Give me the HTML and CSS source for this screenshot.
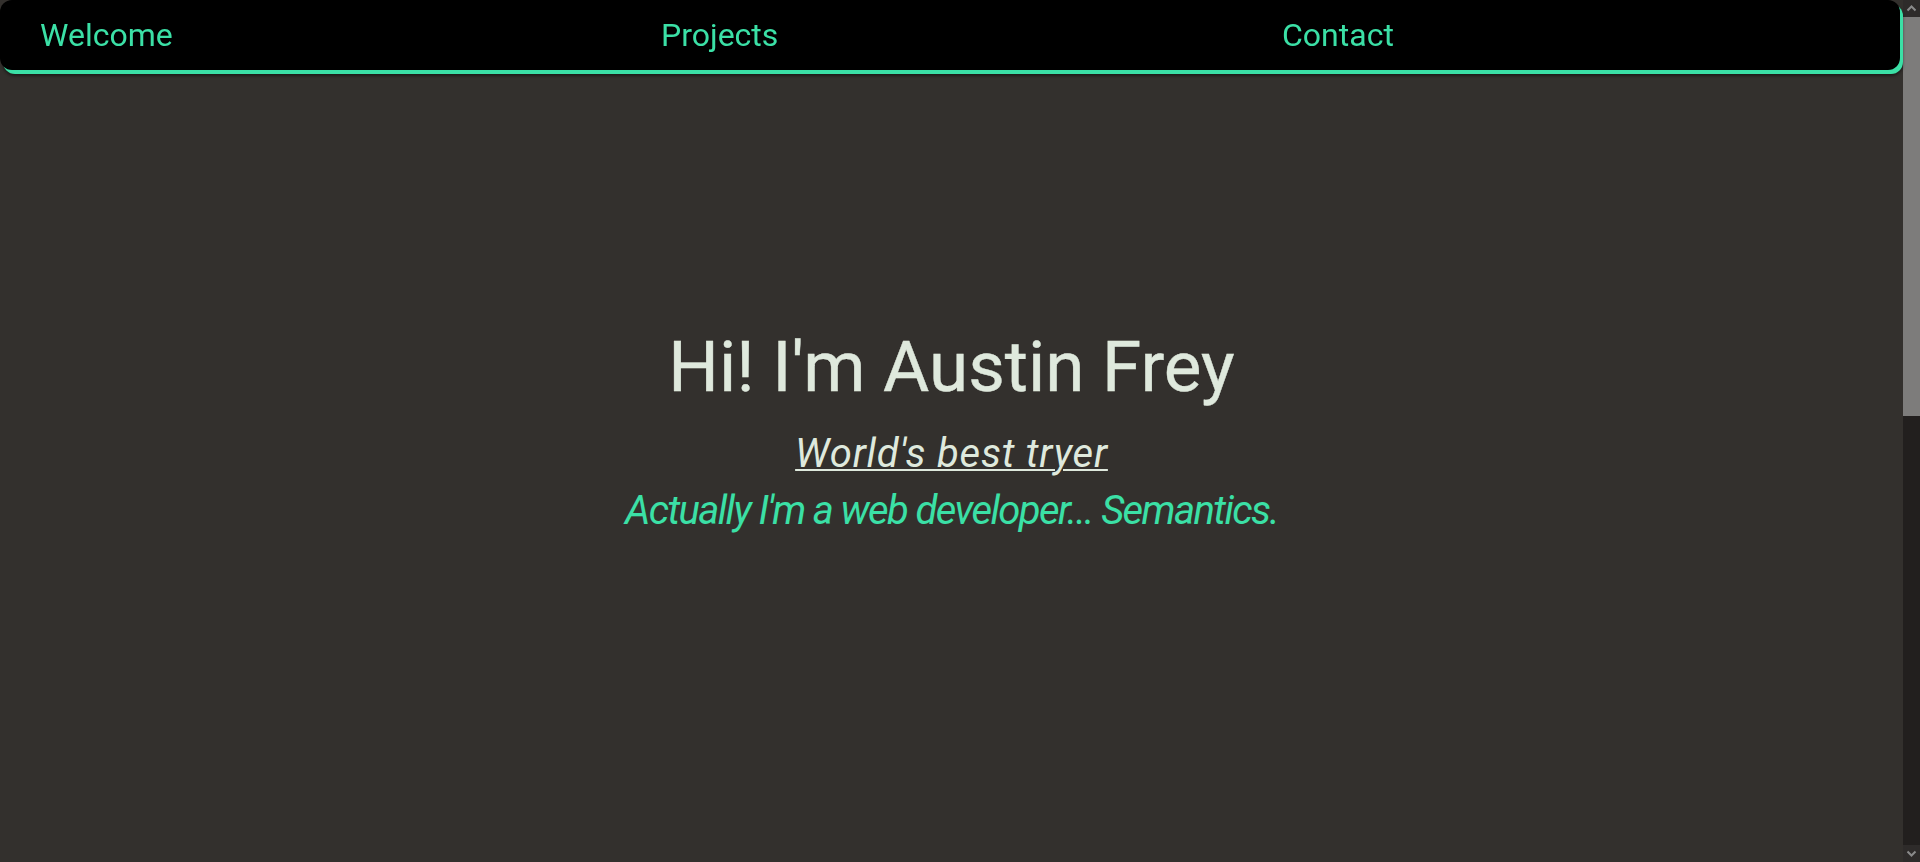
FILE: index.html
```html
<!DOCTYPE html>
<html lang="en">
<head>
<meta charset="utf-8">
<title>Austin Frey</title>
<link rel="stylesheet" href="styles.css">
</head>
<body>
<div class="page">
  <nav class="nav">
    <ul class="nav-list">
      <li class="nav-item"><a class="nav-link" href="#welcome">Welcome</a></li>
      <li class="nav-item"><a class="nav-link" href="#projects">Projects</a></li>
      <li class="nav-item"><a class="nav-link" href="#contact">Contact</a></li>
    </ul>
  </nav>
  <main class="main">
    <section class="hero" id="welcome">
      <h1 class="hero-title">Hi! I'm Austin Frey</h1>
      <p class="hero-tag"><span class="hero-tag-text">World's best tryer</span></p>
      <p class="hero-sub">Actually I'm a web developer... Semantics.</p>
    </section>
    <section class="projects" id="projects"></section>
  </main>
</div>
<div class="scrollbar" aria-hidden="true">
  <div class="sb-btn">
    <svg width="17" height="17" viewBox="0 0 17 17"><polyline points="4.5,10.5 8.5,6.5 12.5,10.5" fill="none" stroke="#8a8a8a" stroke-width="2"/></svg>
  </div>
  <div class="sb-thumb"></div>
  <div class="sb-track"></div>
  <div class="sb-btn">
    <svg width="17" height="17" viewBox="0 0 17 17"><polyline points="4.5,6.5 8.5,10.5 12.5,6.5" fill="none" stroke="#8a8a8a" stroke-width="2"/></svg>
  </div>
</div>
</body>
</html>
```
FILE: styles.css
```css
html {
  background: #33302d;
}
body {
  margin: 0;
  background: #33302d;
  font-family: Roboto, "Liberation Sans", sans-serif;
  color: #dfe9dd;
}
.page {
  margin-right: 17px;
}
.nav {
  height: 70px;
  margin-right: 3px;
  background: #000;
  border-radius: 12px;
  box-shadow: 3px 4px 0 #3be0a6, 3px 6px 3px rgba(0, 0, 0, 0.45);
  display: flex;
  align-items: center;
  position: relative;
  z-index: 1;
}
.nav-list {
  list-style: none;
  margin: 0;
  padding: 0 0 0 40px;
  display: flex;
  width: 100%;
}
.nav-item {
  flex: 0 0 621px;
}
.nav-link {
  font-family: Roboto, sans-serif;
  font-size: 32px;
  color: #3be0a6;
  text-decoration: none;
}
.main {
  min-height: 1720px;
}
.hero {
  display: flex;
  flex-direction: column;
  align-items: center;
  padding-top: 255px;
}
.hero-title {
  margin: 0 0 16px;
  font-size: 71px;
  font-weight: 400;
  line-height: 84px;
  color: #dfe9dd;
  -webkit-text-stroke: 0.4px #dfe9dd;
}
.hero-tag {
  margin: 0;
  font-size: 40px;
  font-style: italic;
  line-height: 57px;
  letter-spacing: 0.8px;
}
.hero-tag-text {
  text-decoration: underline;
  text-decoration-thickness: 2px;
  text-underline-offset: 2px;
  color: #dfe9dd;
}
.hero-sub {
  margin: 0;
  font-size: 40px;
  font-style: italic;
  line-height: 57px;
  color: #3be0a6;
  letter-spacing: -1.6px;
}
.scrollbar {
  position: fixed;
  top: 0;
  right: 0;
  width: 17px;
  height: 100vh;
  display: flex;
  flex-direction: column;
  background: #221f1e;
}
.sb-btn {
  height: 17px;
  flex: none;
  background: #2e2b2a;
}
.sb-btn svg {
  display: block;
}
.sb-thumb {
  height: 399px;
  flex: none;
  background: #7d7c7b;
}
.sb-track {
  flex: 1;
  background: #221f1e;
}
```
